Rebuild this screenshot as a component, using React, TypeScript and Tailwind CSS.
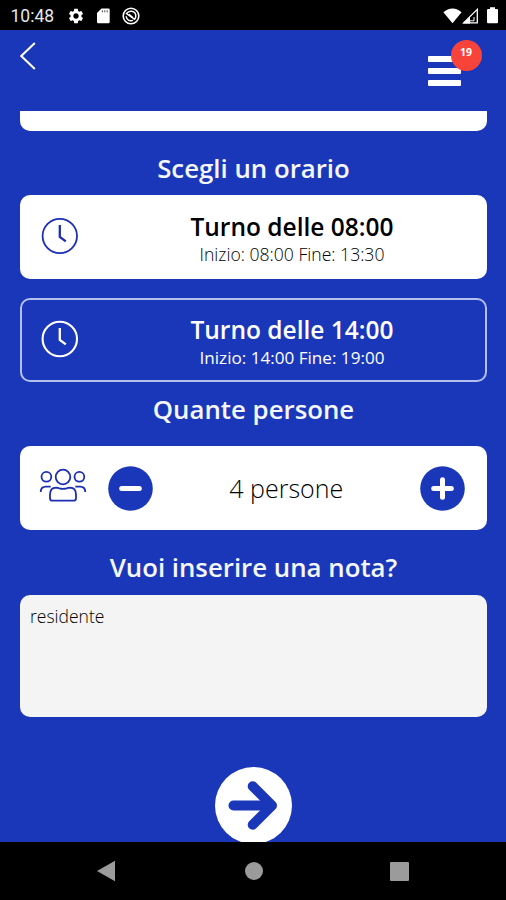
import type { ReactNode } from 'react';
import { MdSettings } from 'react-icons/md';

function StatusBar() {
  return (
    <div className="flex h-[30px] shrink-0 items-center bg-black pt-[1px] pl-[10.5px] pr-[8px] text-white">
      <span className="w-[56.5px] font-['Roboto',sans-serif] text-[17.5px] leading-[30px] text-gray-200">10:48</span>
      <MdSettings className="h-[18px] w-[18px]" />
      <svg className="ml-[12px] h-[16px] w-[13px]" viewBox="0 0 13 16">
        <path d="M4.5 0.5H11.5Q12.7 0.5 12.7 1.7V14Q12.7 15.2 11.5 15.2H1.2Q0 15.2 0 14V5Z" fill="currentColor" />
        <path d="M5.4 2.2V4.4M7.8 2.2V4.4M10.2 2.2V4.4" stroke="#555" strokeWidth="1" />
      </svg>
      <svg className="ml-[12px] h-[18px] w-[18px]" viewBox="0 0 18 18" fill="none" stroke="currentColor">
        <circle cx="9" cy="9" r="7.8" strokeWidth="1.6" />
        <path d="M4.5 6.5Q6.5 3.8 9.8 4.2Q13.8 5 13.8 9Q13.8 11 12.6 12.3ZM4.2 9.2Q4.6 13.2 8.6 13.8Q10 13.9 11 13.4" strokeWidth="1.5" />
        <path d="M7 7.2L11 10.8" strokeWidth="1.5" />
      </svg>
      <div className="ml-auto flex items-center">
        <svg className="h-[16px] w-[19px]" viewBox="0 0 19 16" fill="currentColor">
          <path d="M0.4 4.2Q4.4 0.4 9.5 0.4T18.6 4.2L9.5 15.2Z" />
        </svg>
        <svg className="h-[16px] w-[17px]" viewBox="0 0 17 16">
          <path d="M1.6 14.9L15.3 1.4V14.9Z" fill="none" stroke="currentColor" strokeWidth="1.3" />
          <path d="M1 15.4L8 8.5V15.4Z" fill="currentColor" />
          <path d="M8 12.8H12V9" fill="none" stroke="currentColor" strokeWidth="1" />
        </svg>
        <svg className="ml-[8px] h-[17px] w-[11px]" viewBox="0 0 11 17" fill="currentColor">
          <path d="M3 0.3H8V2H10Q11 2 11 3V15.2Q11 16.2 10 16.2H1Q0 16.2 0 15.2V3Q0 2 1 2H3Z" />
        </svg>
      </div>
    </div>
  );
}

function Header() {
  return (
    <header className="flex h-[81px] shrink-0 items-start justify-between pl-[20px] pr-[45px]">
      <button className="mt-[12px]">
        <svg className="h-[28px] w-[16px]" viewBox="0 0 16 28" fill="none" stroke="#fff" strokeWidth="2">
          <path d="M14.8 1L1.3 14L14.8 27" />
        </svg>
      </button>
      <button className="relative mt-[26px] flex w-[33px] flex-col gap-[6px]">
        <span className="h-[6px] w-full rounded-[1px] bg-white" />
        <span className="h-[6px] w-full rounded-[1px] bg-white" />
        <span className="h-[6px] w-full rounded-[1px] bg-white" />
        <span className="absolute -top-[16.5px] left-[22.5px] h-[31px] w-[31px] rounded-full bg-[#f8433b] text-center text-[10.5px] leading-[25px] font-bold text-white">
          19
        </span>
      </button>
    </header>
  );
}

function Heading({ children, className }: { children: ReactNode; className: string }) {
  return (
    <h2 className={`flex shrink-0 items-center justify-center text-[25.8px] font-semibold text-[#f5f7ff] ${className}`}>
      {children}
    </h2>
  );
}

function ClockIcon({ strokeWidth }: { strokeWidth: number }) {
  return (
    <svg className="h-[38px] w-[38px]" viewBox="0 0 38 38" fill="none" stroke="currentColor" strokeWidth={strokeWidth}>
      <circle cx="18.8" cy="19" r="17.2" />
      <path d="M18.8 8V19.8L24.8 24.3" strokeWidth="2.3" />
    </svg>
  );
}

type ShiftProps = {
  title: string;
  start: string;
  end: string;
  selected?: boolean;
};

function ShiftCard({ title, start, end, selected }: ShiftProps) {
  return (
    <button
      className={
        selected
          ? 'flex h-[84px] shrink-0 rounded-[10px] border-2 border-[#b4c0f0] pl-[19px] text-white'
          : 'flex h-[84px] shrink-0 rounded-[10px] border-2 border-white bg-white pl-[19px] text-black'
      }
    >
      <span className={selected ? 'mt-[20px] text-white' : 'mt-[20px] text-[#1c2fb4]'}>
        <ClockIcon strokeWidth={selected ? 2.1 : 1.8} />
      </span>
      <span className="flex flex-1 flex-col items-center pt-[13px] pl-[57px] pr-[37px]">
        <span className="text-[24.5px] leading-[34px] font-semibold">{title}</span>
        <span
          className={
            selected
              ? 'pt-[1px] text-[17.1px] leading-[20px]'
              : 'text-[17.6px] leading-[20px] font-light text-black'
          }
        >
          Inizio: {start} Fine: {end}
        </span>
      </span>
    </button>
  );
}

function PeopleIcon() {
  return (
    <svg className="h-[34px] w-[48px]" viewBox="0 0 48 34" fill="none" stroke="#1c2fb4" strokeWidth="1.8">
      <circle cx="24" cy="9" r="7.3" />
      <circle cx="7.4" cy="8.8" r="4.9" />
      <circle cx="40.4" cy="8.8" r="4.9" />
      <path d="M17 19.7Q19 19.7 20.5 20.3Q24 21.3 27.5 20.3Q29 19.7 31 19.7Q37 20 37 26.5V30.2Q37 32.7 34.5 32.7H13.5Q11 32.7 11 30.2V26.5Q11 20 17 19.7Z" />
      <path d="M1.7 24Q1.7 18.6 7 18.6H11.7M46.3 24Q46.3 18.6 41 18.6H36.3" />
    </svg>
  );
}

function RoundButton({ plus }: { plus?: boolean }) {
  return (
    <button>
      <svg className="h-[45px] w-[45px]" viewBox="0 0 45 45" stroke="#fff" strokeWidth="5" strokeLinecap="round">
        <circle cx="22.5" cy="22.5" r="22.3" fill="#1b37b9" stroke="none" />
        <path d="M13.7 22.5H31.3" />
        {plus && <path d="M22.5 13.7V31.3" />}
      </svg>
    </button>
  );
}

function NavBar() {
  return (
    <nav className="flex h-[58px] shrink-0 items-center bg-black pl-[97px]">
      <svg className="h-[22px] w-[18px]" viewBox="0 0 18 22" fill="#9b9b9b">
        <path d="M0 11L18 0.7V21.3Z" />
      </svg>
      <span className="ml-[129.5px] h-[18px] w-[18px] rounded-full bg-[#9b9b9b]" />
      <span className="ml-[127px] h-[19px] w-[19px] rounded-[1px] bg-[#9b9b9b]" />
    </nav>
  );
}

export default function App() {
  return (
    <div className="flex h-[900px] w-[506px] flex-col overflow-hidden bg-[#1b37b9] font-['Open_Sans',sans-serif]">
      <StatusBar />
      <Header />
      <main className="flex min-h-0 flex-1 flex-col overflow-hidden pl-[20px] pr-[19px]">
        <div className="h-[20px] shrink-0 rounded-b-[10px] bg-white" />
        <Heading className="h-[64px] pt-[10px]">Scegli un orario</Heading>
        <ShiftCard title="Turno delle 08:00" start="08:00" end="13:30" />
        <div className="h-[19px] shrink-0" />
        <ShiftCard title="Turno delle 14:00" start="14:00" end="19:00" selected />
        <Heading className="h-[64px] pb-[10px]">Quante persone</Heading>
        <div className="flex h-[84px] shrink-0 items-center rounded-[10px] bg-white pl-[19px] pr-[22px]">
          <div className="pb-[6px]">
            <PeopleIcon />
          </div>
          <div className="ml-[20.5px] flex">
            <RoundButton />
          </div>
          <span className="flex-1 pt-[1px] text-center text-[25px] font-light text-black">4 persone</span>
          <div className="flex">
            <RoundButton plus />
          </div>
        </div>
        <Heading className="h-[65px] pt-[9px]">Vuoi inserire una nota?</Heading>
        <textarea
          className="h-[122px] shrink-0 resize-none rounded-[10px] bg-[#f4f4f4] px-[10px] py-[9px] text-[17.5px] leading-[24px] font-light text-black outline-none"
          defaultValue="residente"
        />
        <button className="mt-[50px] h-[77px] w-[77px] shrink-0 self-center">
          <svg className="h-[77px] w-[77px]" viewBox="0 0 77 77" fill="none">
            <circle cx="38.5" cy="38.5" r="38.5" fill="#fff" />
            <path d="M18.5 38.5H52" stroke="#1b37b9" strokeWidth="10" strokeLinecap="round" />
            <path
              d="M37.7 19.2L57 38.5L37.7 57.8"
              stroke="#1b37b9"
              strokeWidth="10"
              strokeLinecap="round"
              strokeLinejoin="round"
            />
          </svg>
        </button>
      </main>
      <NavBar />
    </div>
  );
}
